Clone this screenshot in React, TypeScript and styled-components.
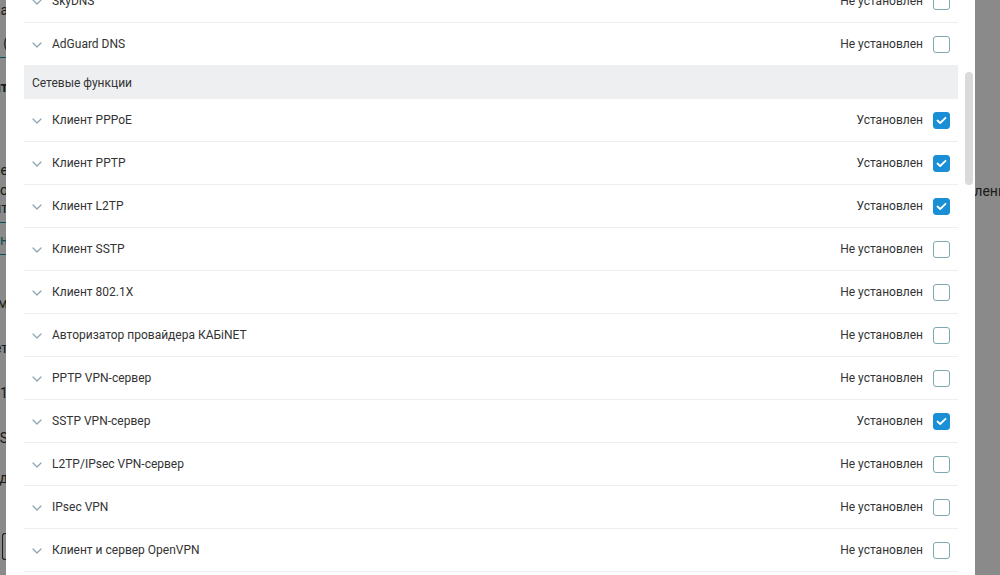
import { useLayoutEffect, useRef } from 'react';
import styled, { createGlobalStyle } from 'styled-components';

const GlobalStyle = createGlobalStyle`
  html, body {
    margin: 0;
    padding: 0;
    height: 100%;
    overflow: hidden;
  }
  body {
    font-family: Roboto, 'Noto Sans', 'Liberation Sans', sans-serif;
    color: #333;
    background: #fff;
  }
  #root {
    height: 100%;
  }
`;

const sections = [
  {
    title: null,
    items: [
      { name: 'SkyDNS', installed: false },
      { name: 'AdGuard DNS', installed: false },
    ],
  },
  {
    title: 'Сетевые функции',
    items: [
      { name: 'Клиент PPPoE', installed: true },
      { name: 'Клиент PPTP', installed: true },
      { name: 'Клиент L2TP', installed: true },
      { name: 'Клиент SSTP', installed: false },
      { name: 'Клиент 802.1X', installed: false },
      { name: 'Авторизатор провайдера КАБiNET', installed: false },
      { name: 'PPTP VPN-сервер', installed: false },
      { name: 'SSTP VPN-сервер', installed: true },
      { name: 'L2TP/IPsec VPN-сервер', installed: false },
      { name: 'IPsec VPN', installed: false },
      { name: 'Клиент и сервер OpenVPN', installed: false },
      { name: 'Сервер SSH', installed: false },
    ],
  },
];

// fragments of the page under the dialog, only their last letters peek out
const leftScraps = [
  { text: 'Настройка', gap: 0 },
  { text: '(', gap: 15, field: true },
  { text: 'Компонент', gap: 20, bold: true },
  { text: 'Обновление', gap: 65 },
  { text: 'установлено', gap: 2 },
  { text: 'компонент', gap: 0, field: true },
  { text: 'Применен', gap: 8, link: true, field: true },
  { text: 'Режим', gap: 39 },
  { text: 'Будет', gap: 27 },
  { text: '(4-1', gap: 27 },
  { text: '(SOS', gap: 27 },
  { text: 'Выход', gap: 22 },
];

const Chevron = () => (
  <svg width="10" height="6" viewBox="0 0 10 6" fill="none">
    <polyline points="1,1 5,5 9,1" stroke="#8aa4b2" strokeWidth="1.2" strokeLinecap="round" strokeLinejoin="round" />
  </svg>
);

const Check = () => (
  <svg width="11" height="9" viewBox="0 0 11 9" fill="none">
    <polyline points="1.5,4.5 4.2,7 9.5,1.8" stroke="#fff" strokeWidth="1.8" strokeLinecap="round" strokeLinejoin="round" />
  </svg>
);

export default function App() {
  const listRef = useRef<HTMLDivElement>(null);

  useLayoutEffect(() => {
    if (listRef.current) listRef.current.scrollTop = 20;
  }, []);

  return (
    <>
      <GlobalStyle />
      <Page>
        <LeftScraps>
          {leftScraps.map((s, i) => (
            <Scrap key={i} $gap={s.gap} $bold={s.bold} $link={s.link} $field={s.field}>
              <span>{s.text}</span>
            </Scrap>
          ))}
          <ScrapButton />
        </LeftScraps>
        <RightScraps>
          <RightText>Обновления</RightText>
        </RightScraps>
      </Page>
      <Overlay />
      <Modal>
        <ListViewport ref={listRef}>
          <List>
            {sections.map((section, si) => (
              <Section key={si}>
                {section.title && <SectionTitle>{section.title}</SectionTitle>}
                {section.items.map((item) => (
                  <Row key={item.name}>
                    <Toggle>
                      <Chevron />
                    </Toggle>
                    <Name>{item.name}</Name>
                    <Status>{item.installed ? 'Установлен' : 'Не установлен'}</Status>
                    <Box $checked={item.installed}>{item.installed && <Check />}</Box>
                  </Row>
                ))}
              </Section>
            ))}
          </List>
        </ListViewport>
        <ScrollTrack>
          <ScrollThumb />
        </ScrollTrack>
      </Modal>
    </>
  );
}

const Page = styled.div`
  display: flex;
  justify-content: space-between;
  height: 100%;
  background: #fff;
`;

const LeftScraps = styled.div`
  display: flex;
  flex-direction: column;
  width: 8px;
  padding-top: 1px;
`;

const Scrap = styled.div<{ $gap: number; $bold?: boolean; $link?: boolean; $field?: boolean }>`
  display: flex;
  justify-content: flex-end;
  margin-top: ${(p) => p.$gap}px;
  font-size: 14px;
  line-height: 18px;
  white-space: nowrap;
  font-weight: ${(p) => (p.$bold ? 700 : 400)};
  color: ${(p) => (p.$link ? '#1a8fa8' : '#333')};
  padding-bottom: ${(p) => (p.$field ? '5px' : '0')};
  border-bottom: ${(p) => (p.$field ? '1px solid #1a8fa8' : 'none')};
`;

const ScrapButton = styled.div`
  margin-top: 46px;
  margin-left: 2px;
  height: 25px;
  border: 1px solid #333;
  border-right: none;
  border-radius: 3px 0 0 3px;
`;

const RightScraps = styled.div`
  display: flex;
  flex-direction: column;
  width: 25px;
  overflow: hidden;
  padding-top: 182px;
`;

const RightText = styled.div`
  font-size: 14px;
  line-height: 18px;
  white-space: nowrap;
  margin-left: -42px;
  color: #333;
`;

const Overlay = styled.div`
  position: fixed;
  inset: 0;
  background: rgba(0, 0, 0, 0.46);
`;

const Modal = styled.div`
  position: fixed;
  top: 0;
  left: 6px;
  width: 969px;
  height: 100%;
  display: flex;
  background: #fff;
`;

const ListViewport = styled.div`
  flex: 1;
  overflow: hidden;
  padding-left: 18px;
`;

const List = styled.div`
  display: flex;
  flex-direction: column;
`;

const Section = styled.div`
  display: flex;
  flex-direction: column;
`;

const SectionTitle = styled.div`
  display: flex;
  align-items: center;
  height: 33px;
  padding-left: 8px;
  background: #eeeff0;
  font-size: 12px;
  color: #333;
`;

const Row = styled.div`
  display: flex;
  align-items: center;
  height: 42px;
  padding: 0 8px;
  border-bottom: 1px solid #eceeef;
  font-size: 12px;
`;

const Toggle = styled.span`
  display: flex;
  align-items: center;
  justify-content: center;
  width: 10px;
  margin-right: 10px;
  padding-top: 1px;
`;

const Name = styled.span`
  flex: 1;
  color: #333;
`;

const Status = styled.span`
  color: #333;
  margin-right: 10px;
`;

const Box = styled.span<{ $checked: boolean }>`
  display: flex;
  align-items: center;
  justify-content: center;
  box-sizing: border-box;
  width: 17px;
  height: 17px;
  border-radius: 3px;
  border: 1px solid ${(p) => (p.$checked ? '#1a8fd6' : '#7ea8b0')};
  background: ${(p) => (p.$checked ? '#1a8fd6' : '#fff')};
`;

const ScrollTrack = styled.div`
  display: flex;
  flex-direction: column;
  width: 17px;
  padding-top: 72px;
  box-sizing: border-box;
`;

const ScrollThumb = styled.div`
  width: 8px;
  height: 113px;
  margin-left: 7px;
  border-radius: 4px;
  background: #dadada;
`;
